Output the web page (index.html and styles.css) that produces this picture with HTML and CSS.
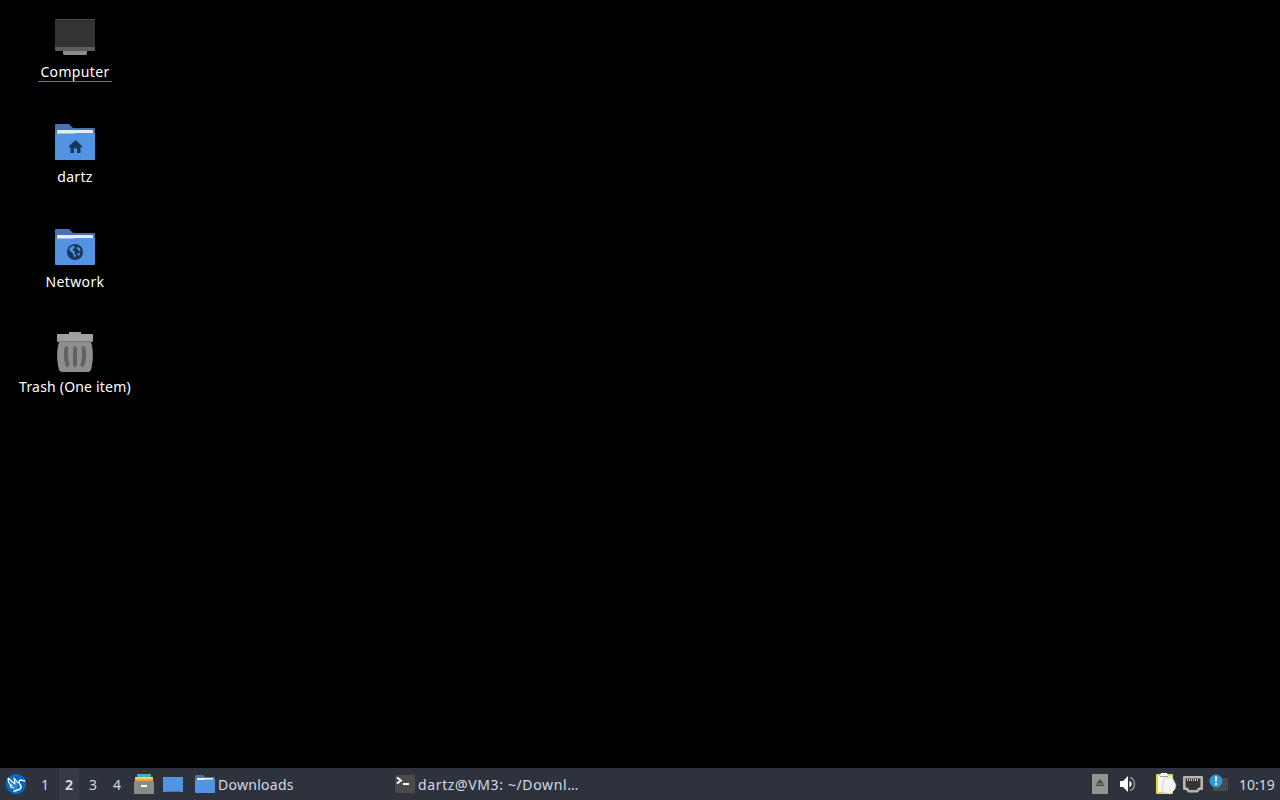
FILE: index.html
```
<!DOCTYPE html>
<html lang="en">
<head>
    <meta charset="UTF-8">
    <meta name="viewport" content="width=device-width, initial-scale=1.0">
    <title>Desktop</title>
    <link rel="stylesheet" href="styles.css">
</head>
<body>
    <div class="desktop">
        <div class="desktop-icon selected">
            <svg width="48" height="48" viewBox="0 0 48 48">
                <path fill="#8b8b8b" d="M12 38h24v3l-1 1H13l-1-1z"/>
                <rect x="4" y="6" width="40" height="32" rx="1" fill="#5c5c5c"/>
                <path fill="#333" d="M4 7l1-1h38l1 1v27H4z"/>
                <path fill="#484848" d="M5 6h38v1H5z"/>
            </svg>
            <span class="label computer">Computer</span>
        </div>
        <div class="desktop-icon">
            <svg width="48" height="48" viewBox="0 0 48 48">
                <path fill="#4773b3" d="M5 6h13l4 4h21q1 0 1 1v20H4V7q0-1 1-1z"/>
                <path fill="#e4ecf8" d="M7 12h34q1 0 1 1v4H6v-4q0-1 1-1z"/>
                <path fill="#5294e2" d="M4 15.500h18l3-.5h19V41q0 1-1 1H5q-1 0-1-1z"/>
                <path fill="#17385c" d="M24.500 22l7 6.500-1 1-1-.5v6h-3.500v-4.500h-3V35h-3.500v-6l-1 .5-1-1z"/>
            </svg>
            <span class="label dartz">dartz</span>
        </div>
        <div class="desktop-icon">
            <svg width="48" height="48" viewBox="0 0 48 48">
                <path fill="#4773b3" d="M5 6h13l4 4h21q1 0 1 1v20H4V7q0-1 1-1z"/>
                <path fill="#e4ecf8" d="M7 12h34q1 0 1 1v4H6v-4q0-1 1-1z"/>
                <path fill="#5294e2" d="M4 15.500h18l3-.5h19V41q0 1-1 1H5q-1 0-1-1z"/>
                <circle cx="24" cy="29" r="8" fill="#17385c"/>
                <path fill="#5294e2" d="M18.500 25l3-2 2.500.5-1 2-2 1.500 3 1.500-1 1.500 2 2-1 3-1.500-3-1.500-2.500-2.500-2zM26 23.500l3 2 .5 3-2-1-1.500-2zM27 30h2l-1 3-1.500-1z"/>
            </svg>
            <span class="label network">Network</span>
        </div>
        <div class="desktop-icon">
            <svg width="48" height="48" viewBox="0 0 48 48">
                <path fill="#8e8e8e" d="M8 14h32c2.500 8 2.500 18 0 28q-1 2-3 2H11q-2 0-3-2C5.500 32 5.500 22 8 14z"/>
                <path fill="#a0a0a0" d="M18 4h12v2h11q1 0 1 1v6q0 1-1 1H7q-1 0-1-1V7q0-1 1-1h11z"/>
                <path fill="#787878" d="M7 13h34v1H7z"/>
                <g fill="none" stroke="#626262" stroke-width="4" stroke-linecap="round">
                    <path d="M15.500 20q-1.500 8 1 17M24 20v17M32.500 20q1.500 8-1 17"/>
                </g>
            </svg>
            <span class="label trash">Trash (One item)</span>
        </div>
    </div>

    <div class="panel">
        <div class="menu-button">
            <svg width="22" height="22" viewBox="0 0 22 22">
                <circle cx="11" cy="11" r="10.300" fill="#0766bf"/>
                <path fill="#4aa3e8" d="M3 5l7 6-1-6 4 5v5l-4 3-4-4z" opacity=".45"/>
                <path fill="none" stroke="#fff" stroke-width="1.100" stroke-linejoin="round" d="M3 5l7 6L9 5l4 5M3 5c0 4 1 6.500 4 7.500l-2 .5c1 2 2.500 2 4 1.500"/>
                <path fill="none" stroke="#fff" stroke-width="1.500" stroke-linejoin="round" d="M20 8l-3-.8c-2-.7-3 .3-3 2 0 2 2 2 2 4.500 0 2-1.500 3-3.500 3.300l-4 1.500"/>
            </svg>
        </div>
        <div class="switcher">
            <span class="desk">1</span>
            <span class="desk active">2</span>
            <span class="desk">3</span>
            <span class="desk">4</span>
        </div>
        <div class="quick-launch">
            <svg width="22" height="22" viewBox="0 0 22 22">
                <path fill="#3fb7ad" d="M4 1h14v3H4z"/>
                <path fill="#f4d35d" d="M2 4h18v3H2z"/>
                <path fill="#e7a64b" d="M2 6h18v2H2z"/>
                <rect x="1" y="8" width="20" height="13" rx="1" fill="#8b8b87"/>
                <path fill="#fff" d="M8 12h6v1.500l-1 .5H9l-1-.5z"/>
            </svg>
            <svg width="22" height="22" viewBox="0 0 22 22">
                <path fill="#5294e2" d="M1 4h20v15h-3l-1-1H5l-1 1H1z"/>
                <path fill="#3b78bd" d="M4 19l1-1h12l1 1z"/>
            </svg>
        </div>
        <div class="tasks">
            <div class="task">
                <svg width="22" height="22" viewBox="0 0 22 22">
                    <path fill="#4773b3" d="M2 2h7l2 2h9q1 0 1 1v8H1V3q0-1 1-1z"/>
                    <path fill="#f2f6fc" d="M3 5h16v3H3z"/>
                    <path fill="#5294e2" d="M1 7h9l1-.5h10V19q0 1-1 1H2q-1 0-1-1z"/>
                </svg>
                <span class="task-title downloads">Downloads</span>
            </div>
            <div class="task">
                <svg width="22" height="22" viewBox="0 0 22 22">
                    <rect x="1" y="2" width="20" height="18" rx="1" fill="#4a4a4a"/>
                    <path fill="none" stroke="#fff" stroke-width="2" d="M3 4.500l4 3-4 3M9 11h6"/>
                </svg>
                <span class="task-title terminal">dartz@VM3: ~/Downl…</span>
            </div>
        </div>
        <div class="tray">
            <svg class="eject" width="16" height="20" viewBox="0 0 16 20">
                <path fill="#949494" d="M0 0h16v20H0z"/>
                <path fill="#4b4b4b" d="M8 5l4 4.500H4zM4 10.500h8V12H4z"/>
            </svg>
            <svg class="volume" width="18" height="18" viewBox="0 0 18 18">
                <path fill="#fff" d="M1 6h3l5-5v16l-5-5H1z"/>
                <path fill="#fff" d="M10.500 5.500q4.500 3.500 0 7z"/>
                <path fill="none" stroke="#8b8e96" stroke-width="1.600" d="M11 2.500c6 2 6 11 0 13"/>
            </svg>
            <svg class="clipboard" width="22" height="22" viewBox="0 0 22 22">
                <rect x="1" y="1" width="17" height="20" rx="1" fill="#dfe03c"/>
                <path fill="#f7f7f2" d="M3 3h14v16H3z"/>
                <path fill="#fff" d="M6 0h6l1 4H5z"/>
                <path fill="#a2a2a2" d="M5 3h8v1H5z"/>
                <path fill="#f4f4f0" stroke="#c5c6c1" stroke-width=".6" d="M9 5l8-1 4 8-1 4-5 5-8-2z"/>
                <path fill="#fff" d="M15 15l5 1-5 5z"/>
            </svg>
            <svg class="ethernet" width="22" height="20" viewBox="0 0 22 20">
                <path fill="#34332f" stroke="#b5b5b5" stroke-width="2.600" stroke-linejoin="round" d="M2.300 3.300h17.400v11.400h-2.700l-1.500 2.500h-9L5 14.700H2.300z"/>
                <path fill="none" stroke="#d7cc9c" stroke-width="2" stroke-dasharray="1 1" d="M5 6h12"/>
            </svg>
            <svg class="notice" width="20" height="20" viewBox="0 0 20 20">
                <path fill="#4a4b4e" d="M9 4h10v13H4v-5z"/>
                <circle cx="7" cy="7" r="6.500" fill="#3197d8"/>
                <path fill="#fff" d="M6 2.500h2L7.600 8H6.400zM6 9h2v2H6z"/>
            </svg>
            <span class="clock">10:19</span>
        </div>
    </div>
</body>
</html>
```
FILE: styles.css
```
* { margin: 0; padding: 0; box-sizing: border-box; }
body {
    height: 100vh;
    display: flex;
    flex-direction: column;
    background: #000;
    color: #fff;
    font-family: 'Noto Sans', sans-serif;
    font-size: 14px;
    overflow: hidden;
}
svg { display: block; flex-shrink: 0; }
.desktop {
    flex: 1;
    width: 150px;
    padding-top: 13px;
}
.desktop-icon {
    height: 105px;
    display: flex;
    flex-direction: column;
    align-items: center;
}
.label {
    height: 21px;
    padding: 0 2px;
    line-height: 21px;
    letter-spacing: 0.35px;
    white-space: nowrap;
}
.label.trash { letter-spacing: 0.2px; }
.selected .label { border-bottom: 1px solid #5078c0; }
.panel {
    height: 32px;
    display: flex;
    align-items: center;
    background: #2e323d;
    color: #d3dae3;
}
.menu-button { width: 33px; padding-left: 5px; }
.switcher { display: flex; }
.desk {
    width: 24px;
    height: 32px;
    line-height: 33px;
    text-align: center;
}
.desk.active {
    width: 20px;
    margin: 0 2px;
    background: #353a44;
    font-weight: bold;
}
.quick-launch {
    display: flex;
    gap: 7px;
    margin-left: 4px;
}
.tasks { display: flex; flex: 1; margin-left: 10px; }
.task {
    width: 200px;
    display: flex;
    align-items: center;
    gap: 2px;
    white-space: nowrap;
}
.downloads { letter-spacing: 0.27px; }
.terminal { letter-spacing: 0.63px; }
.tray { display: flex; align-items: center; }
.volume { margin-left: 11px; }
.clipboard { margin-left: 18px; }
.ethernet { margin-left: 5px; }
.notice { margin-left: 5px; }
.clock { width: 41px; margin-left: 10px; }
```
